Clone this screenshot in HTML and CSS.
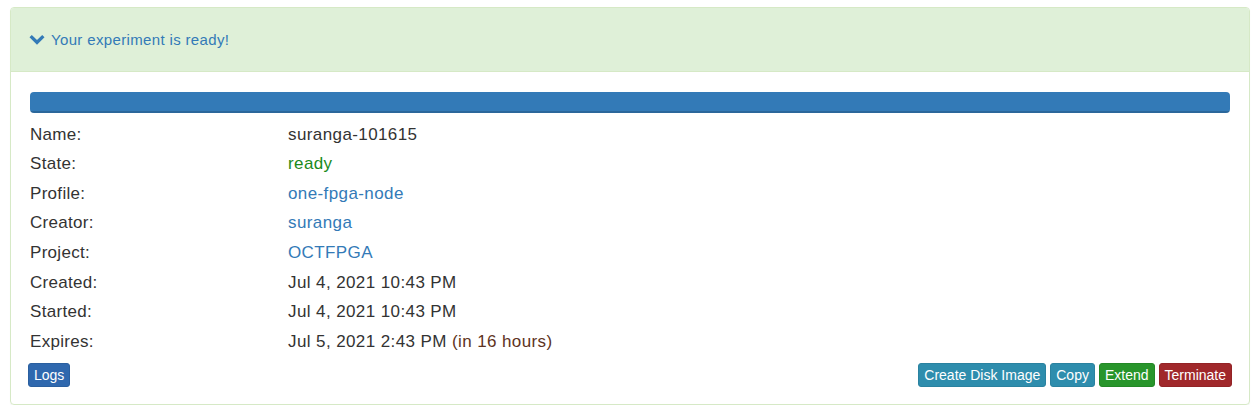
FILE: index.html
```html
<!DOCTYPE html>
<html>
<head>
<meta charset="utf-8">
<link rel="stylesheet" href="styles.css">
</head>
<body>
<div class="panel">
  <div class="panel-heading">
    <svg class="chev" width="16" height="12" viewBox="0 0 16 12"><path d="M0.5 3.2 L2.8 0.9 L8 6.1 L13.2 0.9 L15.5 3.2 L8 10.7 Z" fill="#337ab7"/></svg>
    <span class="title">Your experiment is ready!</span>
  </div>
  <div class="panel-body">
    <div class="progress"><div class="progress-bar"></div></div>
    <table class="info">
      <tr><td class="lbl">Name:</td><td>suranga-101615</td></tr>
      <tr><td class="lbl">State:</td><td class="ok">ready</td></tr>
      <tr><td class="lbl">Profile:</td><td class="link">one-fpga-node</td></tr>
      <tr><td class="lbl">Creator:</td><td class="link">suranga</td></tr>
      <tr><td class="lbl">Project:</td><td class="link">OCTFPGA</td></tr>
      <tr><td class="lbl">Created:</td><td>Jul 4, 2021 10:43 PM</td></tr>
      <tr><td class="lbl">Started:</td><td>Jul 4, 2021 10:43 PM</td></tr>
      <tr><td class="lbl">Expires:</td><td>Jul 5, 2021 2:43 PM <span class="rem">(in 16 hours)</span></td></tr>
    </table>
    <div class="actions">
      <button class="btn btn-primary">Logs</button>
      <div class="right">
        <button class="btn btn-info">Create Disk Image</button>
        <button class="btn btn-info">Copy</button>
        <button class="btn btn-success">Extend</button>
        <button class="btn btn-danger">Terminate</button>
      </div>
    </div>
  </div>
</div>
</body>
</html>
```
FILE: styles.css
```css
* { box-sizing: border-box; }
body {
  margin: 0;
  padding: 7px 8px 0 10px;
  font-family: "Liberation Sans", Arial, sans-serif;
  color: #333;
  background: #fff;
}
.panel {
  width: 1240px;
  height: 398px;
  border: 1px solid #d6e9c6;
  border-radius: 4px;
  box-shadow: 0 1px 1px rgba(0,0,0,0.05);
}
.panel-heading {
  height: 64px;
  background: #dff0d8;
  border-bottom: 1px solid #d6e9c6;
  border-radius: 3px 3px 0 0;
  display: flex;
  align-items: center;
  padding: 0 0 0 18px;
  color: #337ab7;
  font-size: 15px;
  letter-spacing: 0.35px;
}
.chev { margin-right: 6px; margin-top: 1px; }
.panel-body {
  padding: 20px 19px 0 19px;
}
.progress {
  height: 21px;
  border-radius: 4px;
  overflow: hidden;
  background: #f5f5f5;
}
.progress-bar {
  height: 100%;
  width: 100%;
  background: #337ab7;
  box-shadow: inset 0 -2px 0 rgba(0,0,0,0.15);
}
.info {
  border-collapse: collapse;
  margin-top: 7px;
  font-size: 17px;
  letter-spacing: 0.4px;
}
.info td {
  padding: 0;
  height: 29.57px;
  vertical-align: middle;
}
.info td.lbl { width: 258px; letter-spacing: 0.3px; }
.ok { color: #1a8a1a; }
.link { color: #337ab7; }
.rem { color: #5e3322; }
.actions {
  display: flex;
  justify-content: space-between;
  align-items: center;
  margin-top: 6px;
  margin-left: -2px;
  margin-right: -2px;
}
.right { display: flex; gap: 4px; }
.btn {
  font-family: "Liberation Sans", Arial, sans-serif;
  font-size: 14px;
  line-height: 20px;
  height: 24px;
  padding: 1px 5px;
  border: 1px solid transparent;
  border-radius: 3px;
  color: #fff;
  cursor: pointer;
}
.btn-primary { background: #2f68ae; border-color: #2a5f9f; }
.btn-info { background: #2e8dad; border-color: #2a82a0; }
.btn-success { background: #28952b; border-color: #238826; }
.btn-danger { background: #a0282b; border-color: #932326; }
```
